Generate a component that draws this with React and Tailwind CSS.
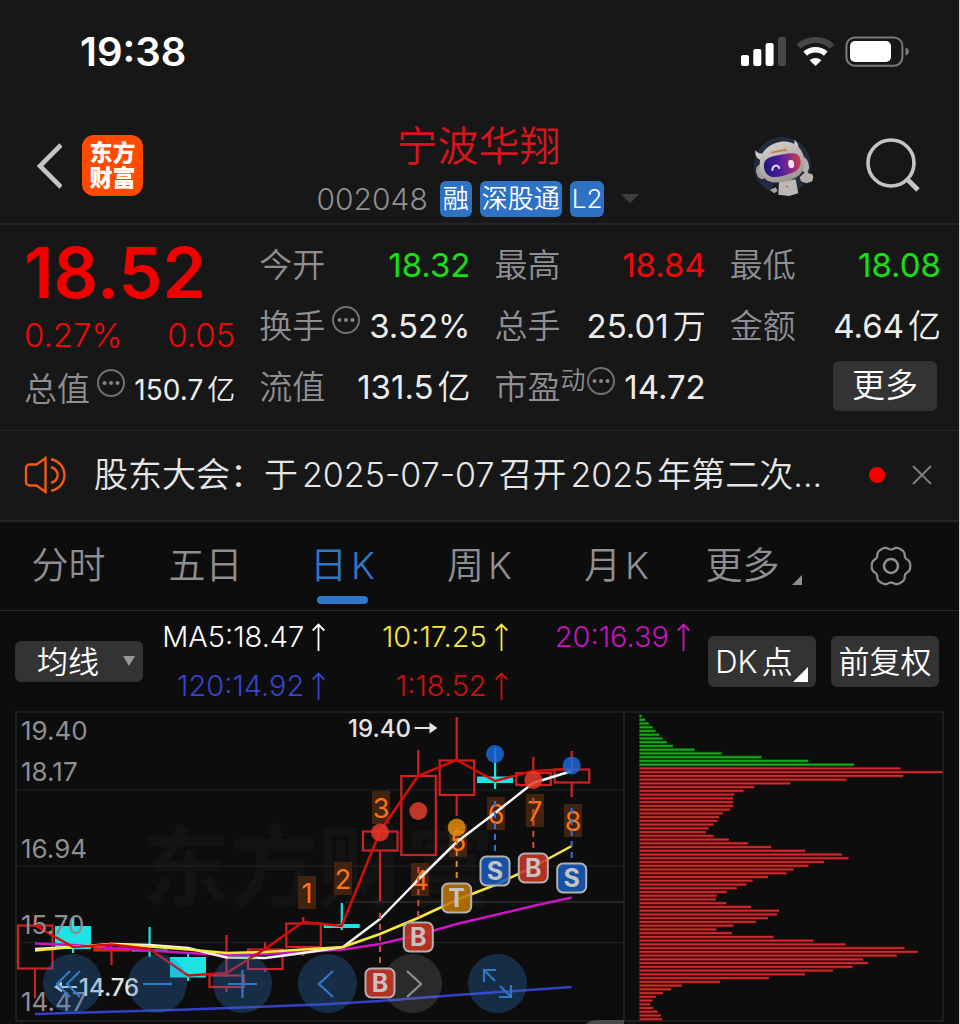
import React from "react";

const candles = [
  { x: 35, top: 925.5, bottom: 968.5, high: 915, low: 998, up: true },
  { x: 73, top: 926, bottom: 949, high: 917, low: 953, up: false },
  { x: 111.5, top: 948.5, bottom: 950.5, high: 942, low: 965, up: true },
  { x: 149.5, top: 949.5, bottom: 951.5, high: 927, low: 957, up: false },
  { x: 188, top: 957, bottom: 977.5, high: 953, low: 981, up: false },
  { x: 226.5, top: 975.5, bottom: 987, high: 935, low: 992, up: true },
  { x: 265, top: 949.5, bottom: 969, high: 942, low: 972, up: true },
  { x: 303.3, top: 923.5, bottom: 947, high: 917, low: 956, up: true },
  { x: 341.7, top: 924, bottom: 928, high: 903, low: 930, up: false },
  { x: 380, top: 831.5, bottom: 850.5, high: 831.5, low: 901, up: true },
  { x: 418.3, top: 776, bottom: 855, high: 750, low: 855, up: true },
  { x: 456.7, top: 760.5, bottom: 795, high: 717, low: 816, up: true },
  { x: 495, top: 776.5, bottom: 783, high: 748, low: 789, up: false },
  { x: 533.3, top: 773, bottom: 785, high: 757, low: 785, up: true },
  { x: 571.7, top: 769.5, bottom: 782.5, high: 751, low: 797, up: true },
];

const averages = [
  { color: "#3440c4", points: "35,1014 188,1009.5 320,1004.5 380,1001 456.7,995 571.7,987" },
  { color: "#cc14c4", points: "35,943.5 73,945 111.5,948 149.5,950.5 188,953 226.5,955 265,954 303,952 343,949.5 380,944 418,935 456.7,924 495,915 533,906 571.7,897.5" },
  { color: "#f7f7f7", points: "35,949 73,947 111.5,944 149.5,945 188,948 226.5,957.5 265,958 303,953 343,947 380,919 418,880 456.7,842 495,813 533,783 571.7,771" },
  { color: "#f6e83c", points: "35,950.5 73,947 111.5,944.5 149.5,946.5 188,949.5 226.5,953 265,952 303,949.5 343,947 380,934 418,918 456.7,900 495,885 533,867 571.7,846" },
  { color: "#d60c0c", points: "35,925.5 73,947 111.5,944.5 149.5,949 188,975.5 226.5,973 265,949 303,922 341.7,926 380,831.5 418,776 456.7,760 495,781 533,771 571.7,769" },
];

const counts = [
  { n: "1", x: 298, y: 876 },
  { n: "2", x: 334, y: 862 },
  { n: "3", x: 372, y: 791 },
  { n: "4", x: 411, y: 863 },
  { n: "5", x: 449, y: 824 },
  { n: "6", x: 487, y: 797 },
  { n: "7", x: 526, y: 794 },
  { n: "8", x: 564, y: 804 },
];

const RED = "#c93426";
const BLUE = "#195bbd";
const AMBER = "#c07406";

const signals = [
  { l: "B", x: 380, y: 983, from: 913, color: RED, dash: "#d84a36" },
  { l: "B", x: 418.3, y: 937, from: 867, color: RED, dash: "#d84a36" },
  { l: "T", x: 456.7, y: 898, from: 828, color: AMBER, dash: "#e08a14" },
  { l: "S", x: 495, y: 871, from: 801, color: BLUE, dash: "#2c74d8" },
  { l: "B", x: 533.3, y: 868, from: 798, color: RED, dash: "#d84a36" },
  { l: "S", x: 571.7, y: 878, from: 808, color: BLUE, dash: "#2c74d8" },
];

const dots = [
  { x: 380, y: 832.5, c: "#e5382a" },
  { x: 418.3, y: 811, c: "#e0402f" },
  { x: 456.7, y: 827.5, c: "#e08a10" },
  { x: 495, y: 754, c: "#1c68d8" },
  { x: 533.3, y: 780, c: "#e5382a" },
  { x: 571.7, y: 765.5, c: "#1c68d8" },
];

const priceScale = [
  ["19.40", 740],
  ["18.17", 781],
  ["16.94", 858],
  ["15.70", 934],
  ["14.47", 1011],
];

const chips = [
  7, 17, 28, 39, 48, 59, 69, 82, 100, 165, 246, 366, 506, 644, 783, 909, 791, 621, 452, 344, 312, 284, 281, 281, 281,
  272, 250, 239, 234, 222, 207, 199, 222, 268, 326, 395, 497, 608, 627, 554, 507, 462, 441, 386, 339, 321, 292, 262,
  232, 229, 260, 335, 419, 413, 385, 349, 282, 231, 277, 402, 521, 618, 795, 835, 772, 671, 686, 639, 580, 496, 388,
  242, 127, 95, 71, 49, 39, 32, 41, 54, 64, 68,
];
const PROFIT_FROM = 14;

const FONT = "Inter, 'Noto Sans CJK SC', sans-serif";

function gearPath() {
  const pts = [];
  for (let i = 0; i < 72; i++) {
    const a = (i / 72) * Math.PI * 2;
    const r = 18.3 + 1.4 * Math.cos(6 * a) - 0.45 * Math.cos(12 * a);
    pts.push(`${(22 + r * Math.cos(a)).toFixed(2)} ${(22 + r * Math.sin(a)).toFixed(2)}`);
  }
  return `M${pts.join("L")}Z`;
}

function StatusBar() {
  return (
    <div className="flex h-[104px] items-center justify-between pr-[50px] pl-20">
      <span className="text-[40px] leading-none font-semibold text-white">19:38</span>
      <svg className="h-8 w-[170px]" viewBox="739 36 170 32" aria-label="信号、无线网络和电量">
        <rect x="741" y="55" width="8" height="11" rx="2" fill="#fff" />
        <rect x="753.3" y="49" width="8" height="17" rx="2" fill="#fff" />
        <rect x="765.6" y="43" width="8" height="23" rx="2" fill="#fff" />
        <rect x="778" y="37" width="8" height="29" rx="2" fill="#464646" />
        <path d="M798.7 46.5a25 25 0 0 1 33.6 0" fill="none" stroke="#464646" strokeWidth="6" />
        <path d="M805.2 53.6a15.5 15.5 0 0 1 20.6 0" fill="none" stroke="#fff" strokeWidth="5.6" />
        <path d="M809.5 60.2a9.4 9.4 0 0 1 12 0l-6 5.8z" fill="#fff" />
        <rect x="846.4" y="37.4" width="56" height="28.4" rx="8.5" fill="none" stroke="#7b7b7b" strokeWidth="2" />
        <rect x="850" y="41" width="41" height="21" rx="5" fill="#fff" />
        <path d="M905.5 47.5c4.5 1 4.5 7 0 8z" fill="#7b7b7b" />
      </svg>
    </div>
  );
}

function Avatar() {
  return (
    <svg className="h-[60px] w-[62px]" viewBox="26 22 186 180" aria-hidden="true">
      <defs>
        <linearGradient id="visor" x1="0" x2="1" y1="0.4" y2="0.3">
          <stop offset="0" stopColor="#20187a" />
          <stop offset="0.4" stopColor="#4a1d9c" />
          <stop offset="0.7" stopColor="#8a2a86" />
          <stop offset="1" stopColor="#d0404c" />
        </linearGradient>
        <linearGradient id="shell" x1="0.3" x2="0.7" y1="0" y2="1">
          <stop offset="0" stopColor="#d4cfcd" />
          <stop offset="1" stopColor="#98928f" />
        </linearGradient>
      </defs>
      <circle cx="114" cy="111" r="86" fill="#232b3f" />
      <path d="M92 158L84 178l-12 8 14 10 40 4 24-4 8-12-4-28z" fill="#1c1a1c" />
      <path d="M104 160l50-8 8 42-28 8-32-4z" fill="#bdb8b5" />
      <path d="M76 184l18-8 6 10-10 8z" fill="#a8a3a0" />
      <path d="M124 176l4-8 6 8z" fill="#d0702c" />
      <path d="M166 146l14-14 8-6 4 8 12 2 3 10-3 12-18 6-16-6z" fill="#b5b0ad" />
      <path d="M48 94c-12-4-18-18-14-30 4 8 10 12 22 10zM140 48c10 0 14-6 8-14 12 4 18 18 12 32z" fill="#cdc8c5" />
      <ellipse cx="50" cy="130" rx="14" ry="22" transform="rotate(-15 50 130)" fill="#a5a09d" />
      <ellipse cx="180" cy="108" rx="13" ry="24" transform="rotate(-14 180 108)" fill="#b5b0ad" />
      <path d="M46 104c2-34 24-56 60-64 34-6 62 10 72 42 8 30-2 54-26 66-28 14-60 18-82 8-18-10-25-31-24-52z" fill="url(#shell)" />
      <path d="M59 116c-2-20 8-28 28-33 22-6 48-11 62-9 14 2 20 12 20 26 0 16-8 26-24 32-20 8-48 15-64 12-14-4-20-14-22-28z" fill="url(#visor)" />
      <path d="M80 69l46-9 2 6-46 8z" fill="#cc7c30" />
      <path d="M84 124c1-14 15-18 21-6" fill="none" stroke="#e2d8f2" strokeWidth="6" strokeLinecap="round" />
      <rect x="132" y="94" width="17" height="24" rx="8" transform="rotate(-8 140 106)" fill="#efe3ea" />
    </svg>
  );
}

function Header() {
  return (
    <header className="flex h-[121px] items-center border-b-2 border-[#262626] pt-1 pr-[38px] pl-9">
      <div className="flex flex-1 items-center gap-5">
        <button aria-label="返回" className="h-12 w-[26px]">
          <svg className="size-full" viewBox="0 0 26 48" fill="none" stroke="#c4c4c4" strokeWidth="4.6">
            <path d="M25 3L4 24l21 21" />
          </svg>
        </button>
        <a
          href="#home"
          className="flex size-[61px] flex-col items-center justify-center rounded-xl bg-[#ff4a00] text-[23px] leading-[25px] font-black text-white"
        >
          <span>东方</span>
          <span>财富</span>
        </a>
      </div>
      <div className="flex flex-col items-center gap-[11px] pt-2">
        <h1 className="text-[41px] leading-[48px] text-[#d8141f]">宁波华翔</h1>
        <div className="flex items-center gap-2 text-[26px] leading-9 text-white">
          <span className="pr-1 text-[30px] text-[#8e8e93]">002048</span>
          <span className="rounded-md bg-[#2d72c4] px-[3px]">融</span>
          <span className="rounded-md bg-[#2d72c4] px-[2px]">深股通</span>
          <span className="rounded-md bg-[#2d72c4] px-[2px]">L2</span>
          <svg className="ml-2 h-[10px] w-5" viewBox="0 0 20 10" aria-hidden="true">
            <path d="M1 0h18l-9 9.5z" fill="#3d3d3d" />
          </svg>
        </div>
      </div>
      <div className="flex flex-1 items-center justify-end gap-[50px]">
        <button aria-label="智能助手">
          <Avatar />
        </button>
        <button aria-label="搜索">
          <svg className="size-14" viewBox="0 0 56 56" fill="none" stroke="#c4c4c4">
            <circle cx="26" cy="25" r="23" strokeWidth="3.6" />
            <path d="M42 41l11 11" strokeWidth="5" />
          </svg>
        </button>
      </div>
    </header>
  );
}

function InfoDots() {
  return (
    <svg className="size-[30px] shrink-0 self-start" viewBox="0 0 30 30" fill="none" aria-hidden="true">
      <circle cx="15" cy="15" r="13" stroke="#707070" strokeWidth="2" />
      <g fill="#858585">
        <circle cx="8.5" cy="15" r="2" />
        <circle cx="15" cy="15" r="2" />
        <circle cx="21.5" cy="15" r="2" />
      </g>
    </svg>
  );
}

function Stat({ label, sup, info, value, unit, tone = "text-[#ececec]" }) {
  return (
    <div className="flex h-[61px] items-center justify-between whitespace-nowrap">
      <dt className="flex h-11 items-center text-[33px] text-[#8e8e93]">
        {label}
        {sup && <span className="self-start text-[25px] leading-7">{sup}</span>}
        {info && (
          <span className={sup ? "self-start" : "self-start pl-[6px]"}>
            <InfoDots />
          </span>
        )}
      </dt>
      <dd className={`text-[33px] font-normal ${tone}`}>
        {value}
        {unit && <span className="ml-1 font-[350]">{unit}</span>}
      </dd>
    </div>
  );
}

function Quote() {
  return (
    <section className="grid grid-cols-4 gap-x-6 border-b border-[#262626] pt-[10px] pr-[18px] pb-3 pl-6">
      <div className="flex flex-col">
        <div className="flex h-[76px] items-center text-[70px] leading-none font-semibold text-[#f20000]">18.52</div>
        <div className="flex h-[50px] items-center justify-between text-[33px] text-[#f00808]">
          <span>0.27%</span>
          <span>0.05</span>
        </div>
        <dl className="flex h-[57px] items-center justify-between whitespace-nowrap">
          <dt className="flex h-11 items-center gap-[6px] text-[33px] text-[#8e8e93]">
            总值
            <InfoDots />
          </dt>
          <dd className="text-[28px] font-normal text-[#ececec]">
            150.7<span className="ml-1 font-[350]">亿</span>
          </dd>
        </dl>
      </div>
      <dl>
        <Stat label="今开" value="18.32" tone="text-[#14e014]" />
        <Stat label="换手" info value="3.52%" />
        <Stat label="流值" value="131.5" unit="亿" />
      </dl>
      <dl>
        <Stat label="最高" value="18.84" tone="text-[#f00808]" />
        <Stat label="总手" value="25.01" unit="万" />
        <Stat label="市盈" sup="动" info value="14.72" />
      </dl>
      <div>
        <dl>
          <Stat label="最低" value="18.08" tone="text-[#14e014]" />
          <Stat label="金额" value="4.64" unit="亿" />
        </dl>
        <div className="flex h-[57px] items-center justify-end pr-1">
          <button className="h-[50px] w-[104px] rounded-md bg-[#333333] text-[33px] leading-none text-white">更多</button>
        </div>
      </div>
    </section>
  );
}

function Notice() {
  return (
    <section className="flex h-[91px] items-center border-b-2 border-[#242424] pr-[27px] pb-[2px] pl-6">
      <svg className="h-10 w-[46px] shrink-0" viewBox="0 0 46 40" fill="none" stroke="#f05a14" strokeWidth="2.4" aria-hidden="true">
        <path d="M21.5 3v34l-9-6.5H5.500a3.500 3.500 0 0 1-3.500-3.500V13a3.500 3.500 0 0 1 3.500-3.500h7z" />
        <path d="M27 12.200a7.900 7.900 0 0 1 0 15.600" />
        <path d="M27 4.200a16 16 0 0 1 0 31.600" />
      </svg>
      <a href="#notice" className="ml-6 min-w-0 flex-1 truncate text-[34px] leading-[48px] text-[#e6e6e6]">
        股东大会：于<span className="mx-1">2025-07-07</span>召开<span className="mx-1">2025</span>年第二次...
      </a>
      <span className="mr-[27px] size-4 shrink-0 rounded-full bg-[#f50000]" />
      <button aria-label="关闭" className="shrink-0">
        <svg className="size-5" viewBox="0 0 20 20" stroke="#7e7e7e" strokeWidth="2">
          <path d="M1 1l18 18M19 1L1 19" />
        </svg>
      </button>
    </section>
  );
}

function Tabs() {
  const tabs = [["分时"], ["五日"], ["日", "K"], ["周", "K"], ["月", "K"], ["更多"]];
  return (
    <nav className="grid h-[89px] grid-cols-7 border-b border-[#2a2a2a] text-[37px] text-[#8e8e93]">
      {tabs.map(([name, unit], i) => (
        <button key={name} className={`relative flex items-center justify-center gap-1 ${i === 2 ? "text-[#2f78c8]" : ""}`}>
          <span>{name}</span>
          {unit && <span>{unit}</span>}
          {i === 2 && <span className="absolute bottom-[6px] h-2 w-[51px] rounded-full bg-[#2f78c8]" />}
          {i === 5 && (
            <svg className="mt-7 ml-2 size-[10px]" viewBox="0 0 10 10" aria-hidden="true">
              <path d="M10 0v10H0z" fill="#8e8e93" />
            </svg>
          )}
        </button>
      ))}
      <button aria-label="设置" className="flex items-center justify-center">
        <svg className="size-11" viewBox="0 0 44 44" fill="none" stroke="#8e8e93" strokeWidth="2.2">
          <path d={gearPath()} strokeLinejoin="round" />
          <circle cx="22" cy="22" r="7" strokeWidth="2.6" />
        </svg>
      </button>
    </nav>
  );
}

function Average({ children, tone }) {
  return (
    <span className={`flex items-center justify-end gap-2 ${tone}`}>
      {children}
      <svg className="h-7 w-[13px]" viewBox="0 0 13 28" fill="none" stroke="currentColor" strokeWidth="1.8" aria-label="上升">
        <path d="M6.500 28V1.500M.7 7.500l5.800-6 5.800 6" />
      </svg>
    </span>
  );
}

function Indicators() {
  return (
    <section className="flex h-[100px] items-center pr-5 pl-[15px]">
      <div className="relative">
        <select
          aria-label="主图指标"
          className="h-[41px] w-32 appearance-none rounded-md bg-[#333333] pl-[22px] text-[31px] leading-[41px] text-white"
        >
          <option>均线</option>
        </select>
        <svg className="pointer-events-none absolute top-[15px] right-2 h-[10px] w-3" viewBox="0 0 12 10" aria-hidden="true">
          <path d="M0 0h12L6 10z" fill="#97979c" />
        </svg>
      </div>
      <div className="grid flex-1 grid-cols-3 pr-[18px] text-[29px] leading-[49px] whitespace-nowrap">
        <Average tone="text-[#ffffff]">MA5:18.47</Average>
        <Average tone="text-[#f6e83c]">10:17.25</Average>
        <Average tone="text-[#c814c0]">20:16.39</Average>
        <Average tone="text-[#3644d0]">120:14.92</Average>
        <Average tone="text-[#d01010]">1:18.52</Average>
      </div>
      <div className="flex gap-[15px] text-[31px] leading-none text-white">
        <button className="relative h-[51px] w-[108px] rounded-md bg-[#333333] pr-4 whitespace-nowrap">
          DK<span className="ml-1">点</span>
          <svg className="absolute right-2 bottom-[5px] size-[15px]" viewBox="0 0 15 15" aria-hidden="true">
            <path d="M15 0v15H0z" fill="#fff" />
          </svg>
        </button>
        <button className="h-[51px] w-[108px] rounded-md bg-[#333333] whitespace-nowrap">前复权</button>
      </div>
    </section>
  );
}

function Candle({ c }) {
  if (c.up) {
    return (
      <g stroke="#cc2222" strokeWidth="2.200" fill="none">
        <path d={`M${c.x} ${c.high}V${c.top}M${c.x} ${c.bottom}V${c.low}`} />
        <rect x={c.x - 17} y={c.top} width="34.500" height={c.bottom - c.top} />
      </g>
    );
  }
  return (
    <g fill="#1ce4e4">
      <rect x={c.x - 1} y={c.high} width="2.200" height={c.low - c.high} />
      <rect x={c.x - 18} y={c.top} width="36" height={c.bottom - c.top} />
    </g>
  );
}

function PriceChart() {
  return (
    <svg className="block w-full" viewBox="0 711 959 313" fontFamily={FONT} aria-label="日K线与筹码分布">
      <text x="142" y="899" fontSize="88" fontWeight="700" fill="#131313">东方财富</text>
      <g stroke="#242424" strokeWidth="1.500" fill="none">
        <path d="M16 790H624M16 866H624M16 942.500H624" stroke="#1d1d1d" />
        <path d="M345 902H624" stroke="#2e2e2e" />
        <path d="M624 712V1021" />
        <rect x="16" y="712" width="927" height="309" />
      </g>
      <g>
        {chips.map((w, i) => {
          const y = 716 + i * 3.744;
          const green = i < PROFIT_FROM;
          return (
            <g key={i}>
              <rect x="639.500" y={y - 1.700} width={w / 3} height="3.400" fill={green ? "#0a4a0a" : "#5c0a0c"} />
              <rect x="639.500" y={y - 0.900} width={w / 3} height="1.800" fill={green ? "#18a818" : "#cc2e2e"} />
            </g>
          );
        })}
      </g>
      {candles.map((c) => (
        <Candle key={c.x} c={c} />
      ))}
      {counts.map((c) => (
        <g key={c.n}>
          <rect x={c.x} y={c.y} width="18" height="33" fill="#40240f" />
          <text x={c.x + 9} y={c.y + 26.500} fontSize="27" fontWeight="400" textAnchor="middle" fill="#ff7216">{c.n}</text>
        </g>
      ))}
      <g fill="none" strokeWidth="2.500" strokeLinejoin="round">
        {averages.map((a) => (
          <polyline key={a.color} points={a.points} stroke={a.color} />
        ))}
      </g>
      {dots.map((d) => (
        <circle key={d.x} cx={d.x} cy={d.y} r="9" fill={d.c} fillOpacity="0.850" />
      ))}
      <g fontSize="26" fontWeight="400" fill="#8e8e93">
        {priceScale.map(([t, y]) => (
          <text key={t} x="21" y={y}>{t}</text>
        ))}
      </g>
      <g fontSize="24" fontWeight="500" fill="#e4e4e4">
        <text x="348" y="737">19.40</text>
        <path d="M414.500 727h15v-4.500l8 5.500-8 5.500V729h-15z" />
        <text x="79" y="996">14.76</text>
        <path d="M77 986H62v-4.500L54 987l8 5.500V988h15z" />
      </g>
      <path d="M586 1024q5-4 12-4h26v4z" fill="#4a4a4a" />
    </svg>
  );
}

function Signals() {
  return (
    <svg className="pointer-events-none absolute inset-0 w-full" viewBox="0 711 959 313" fontFamily={FONT} aria-hidden="true">
      {signals.map((s) => (
        <g key={s.x}>
          <path d={`M${s.x} ${s.from}V${s.y - 15}`} stroke={s.dash} strokeWidth="2" strokeDasharray="6 5" />
          <rect x={s.x - 14.500} y={s.y - 14.500} width="29" height="29" rx="6" fill={s.color} fillOpacity="0.880" stroke="#b4b0b0" strokeWidth="2" />
          <text x={s.x} y={s.y + 9} fontSize="25" fontWeight="700" textAnchor="middle" fill="#c6c2c2">{s.l}</text>
        </g>
      ))}
    </svg>
  );
}

const controls = [
  { label: "最左", d: "M27 17L14 30l13 13M37 17L24 30l13 13" },
  { label: "缩小", d: "M15 30h29" },
  { label: "放大", d: "M15 30h29M29.500 16v28" },
  { label: "向左", d: "M35 17L21 30l14 13" },
  { label: "向右", d: "M24 17l14 13-14 13", muted: true },
  { label: "全屏", d: "M16 28V16h12M16 16l11 11M32 32l11 11M43 31v12H31" },
];

function Chart() {
  return (
    <section className="relative">
      <PriceChart />
      <div className="absolute bottom-[11px] left-[43px] flex gap-[26px]">
        {controls.map((c) => (
          <button
            key={c.label}
            aria-label={c.label}
            disabled={c.muted}
            className={`size-[59px] rounded-full ${c.muted ? "bg-[#a0a0a8]/20 text-[#8e8e93]" : "bg-[#2f78c8]/30 text-[#2f78c8]"}`}
          >
            <svg className="size-full" viewBox="0 0 59 59" fill="none" stroke="currentColor" strokeWidth="2.200">
              <path d={c.d} />
            </svg>
          </button>
        ))}
      </div>
      <Signals />
    </section>
  );
}

export default function App() {
  return (
    <div className="w-full border-r border-[#cfcfcf] bg-[#0d0d0d] font-[Inter,'Noto_Sans_CJK_SC',sans-serif] font-[350]">
      <div className="bg-[#171717]">
        <StatusBar />
        <Header />
        <Quote />
        <Notice />
      </div>
      <Tabs />
      <Indicators />
      <Chart />
    </div>
  );
}
